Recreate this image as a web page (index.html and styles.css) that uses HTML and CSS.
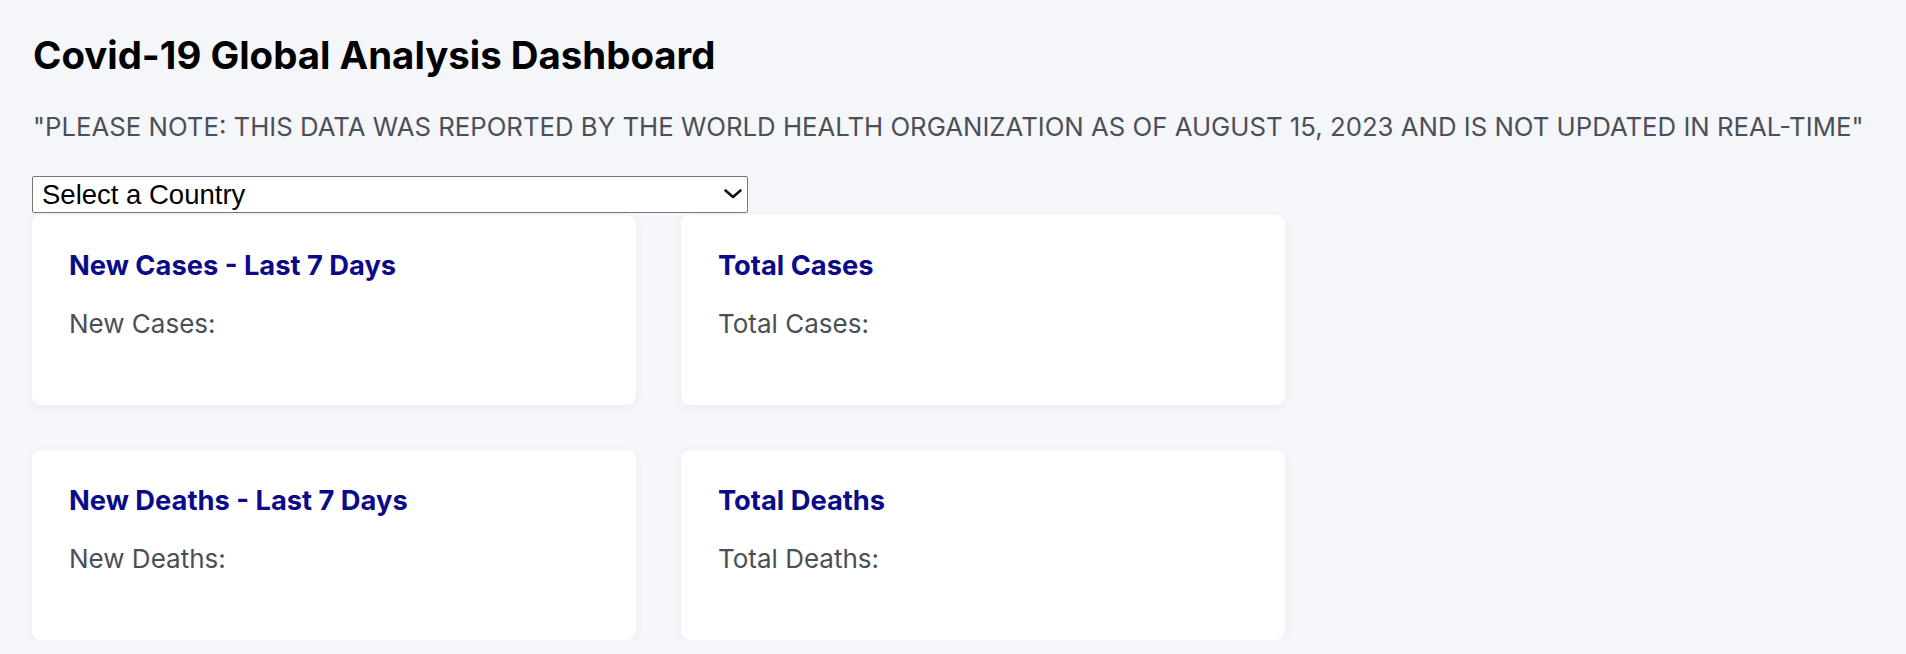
FILE: index.html
```html
<!DOCTYPE html>
<html lang="en">
<head>
<meta charset="utf-8">
<title>Covid-19 Global Analysis Dashboard</title>
<link rel="stylesheet" href="styles.css">
</head>
<body>
<main class="page">
  <h1 class="title">Covid-19 Global Analysis Dashboard</h1>
  <p class="note">"Please note: This data was reported by the World Health Organization as of August 15, 2023 and is not updated in real-time"</p>
  <div class="select-wrap">
    <select class="country-select">
      <option>Select a Country</option>
    </select>
    <svg class="chevron" width="18" height="10" viewBox="0 0 18 10" aria-hidden="true">
      <path d="M1.5 1.5 L9 8 L16.5 1.5" fill="none" stroke="#111" stroke-width="2.6" stroke-linecap="round" stroke-linejoin="round"/>
    </svg>
  </div>
  <section class="cards">
    <div class="card">
      <h2 class="card-title">New Cases - Last 7 Days</h2>
      <p class="card-text">New Cases:</p>
    </div>
    <div class="card">
      <h2 class="card-title">Total Cases</h2>
      <p class="card-text">Total Cases:</p>
    </div>
    <div class="card">
      <h2 class="card-title">New Deaths - Last 7 Days</h2>
      <p class="card-text">New Deaths:</p>
    </div>
    <div class="card">
      <h2 class="card-title">Total Deaths</h2>
      <p class="card-text">Total Deaths:</p>
    </div>
  </section>
</main>
</body>
</html>
```
FILE: styles.css
```css
html, body {
  margin: 0;
  padding: 0;
  background: #f5f6fa;
}

body {
  font-family: Inter, "Noto Sans", sans-serif;
  color: #000;
}

.page {
  padding: 32px 32px 0 32px;
}

.title {
  margin: 0;
  font-size: 38.4px;
  line-height: 46px;
  font-weight: 700;
  color: #000;
  padding-left: 1px;
}

.note {
  margin: 33px 0 0 0;
  padding-left: 1px;
  font-size: 25.75px;
  line-height: 31px;
  font-weight: 400;
  text-transform: uppercase;
  color: #4b5058;
  white-space: nowrap;
}

.select-wrap {
  position: relative;
  width: 716px;
  margin-top: 34px;
}

.country-select {
  display: block;
  width: 716px;
  height: 37px;
  margin: 0;
  padding: 0 30px 0 9px;
  box-sizing: border-box;
  appearance: none;
  -webkit-appearance: none;
  background: #fff;
  border: 1px solid #767676;
  border-radius: 2px;
  font-family: "Liberation Sans", Arial, sans-serif;
  font-size: 27.5px;
  color: #000;
}

.chevron {
  position: absolute;
  right: 6px;
  top: 13px;
  pointer-events: none;
}

.cards {
  display: grid;
  grid-template-columns: 604px 604px;
  column-gap: 45px;
  row-gap: 45px;
  margin-top: 2px;
}

.card {
  box-sizing: border-box;
  height: 190px;
  padding: 34px 37px 0 37px;
  background: #fff;
  border-radius: 9px;
  box-shadow: 0 2px 10px rgba(30, 40, 90, 0.05);
}

.card-title {
  margin: 0;
  font-size: 27.3px;
  line-height: 33px;
  font-weight: 700;
  color: #0b0b8a;
}

.card-text {
  margin: 26px 0 0 0;
  font-size: 26px;
  line-height: 32px;
  font-weight: 400;
  color: #4a4f56;
}
```
